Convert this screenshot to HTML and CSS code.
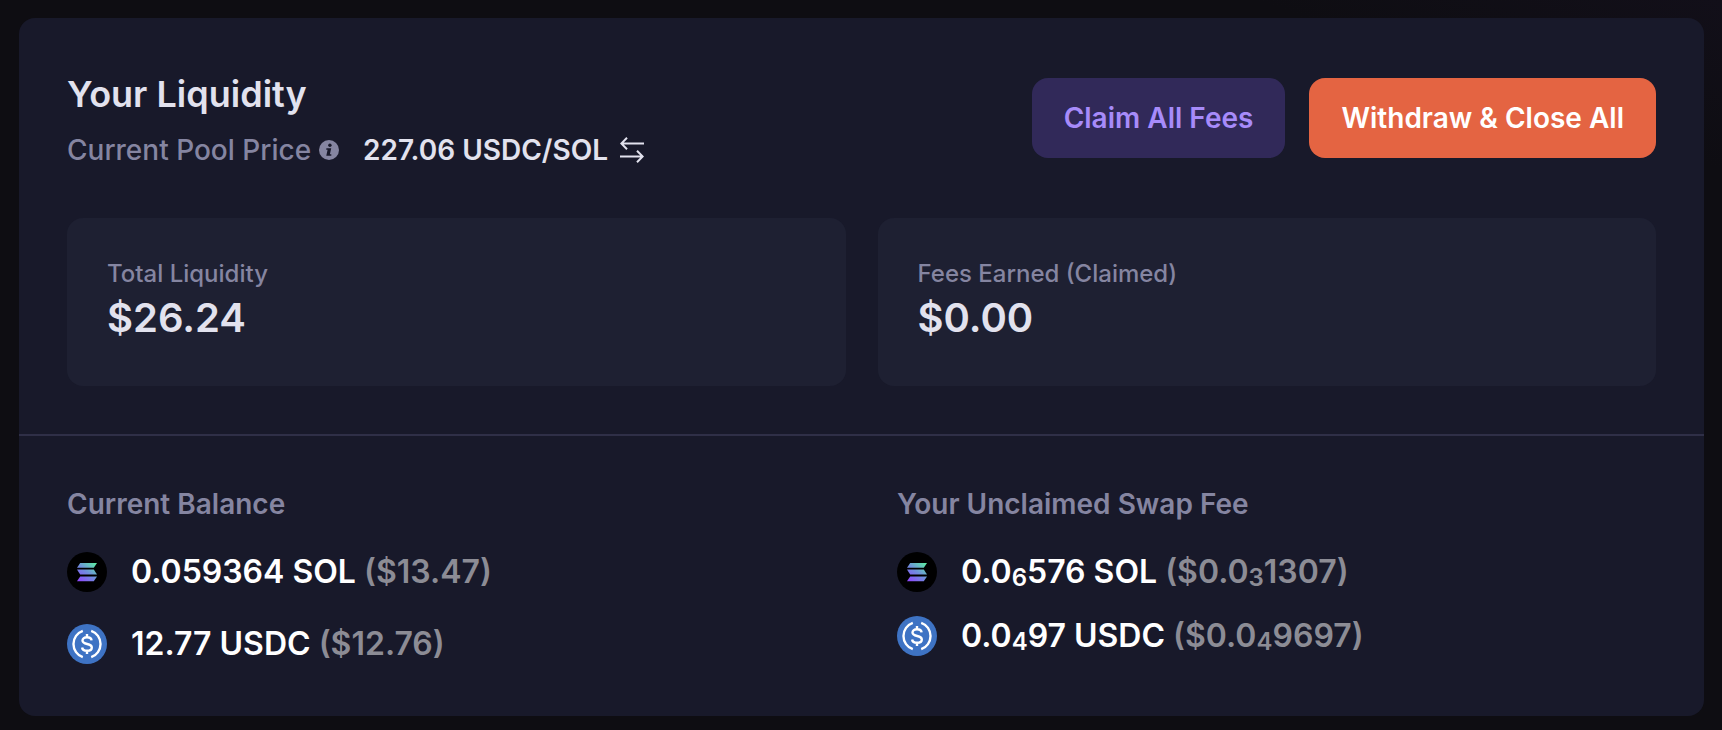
FILE: index.html
```html
<!DOCTYPE html>
<html lang="en">
<head>
<meta charset="utf-8">
<title>Your Liquidity</title>
<meta name="viewport" content="width=device-width, initial-scale=1">
<link rel="stylesheet" href="styles.css">
</head>
<body>
<svg class="defs" aria-hidden="true">
  <defs>
    <linearGradient id="sol-gradient" gradientUnits="userSpaceOnUse" x1="12" y1="30" x2="28" y2="10">
      <stop offset="0" stop-color="#9045ff"/>
      <stop offset="0.5" stop-color="#6f8fdc"/>
      <stop offset="1" stop-color="#5cf0a0"/>
    </linearGradient>
    <symbol id="sol" viewBox="0 0 40 40">
      <circle cx="20" cy="20" r="20" fill="#000"/>
      <g fill="url(#sol-gradient)">
        <path d="M13.2 11H30l-3.200 4.800H10z"/>
        <path d="M10 17.600H26.800L30 22.400H13.200z"/>
        <path d="M13.200 24.600H30l-3.200 4.600H10z"/>
      </g>
    </symbol>
    <symbol id="usdc" viewBox="0 0 40 40">
      <circle cx="20" cy="20" r="20" fill="#3e73c4"/>
      <g fill="none" stroke="#fff" stroke-width="2.4">
        <path d="M15.800 6.800a14 14 0 0 0 0 26.400M24.200 6.800a14 14 0 0 1 0 26.400"/>
        <path d="M24.600 16.400c-.3-2-2-3.100-4.600-3.100-2.700 0-4.500 1.200-4.500 3.200 0 4.800 9.300 2.200 9.300 7 0 2-1.900 3.300-4.700 3.300-2.900 0-4.700-1.200-5-3.300M20 10v3.400M20 26.700V30"/>
      </g>
    </symbol>
  </defs>
</svg>
<main class="card">
  <section class="summary">
    <header class="header">
      <div class="heading">
        <h1 class="title">Your Liquidity</h1>
        <div class="price">
          <span class="price-label">Current Pool Price
            <svg class="info" viewBox="0 0 20 20" aria-hidden="true"><circle cx="10" cy="10" r="10" fill="#8585a1"/><circle cx="10.900" cy="5.200" r="1.700" fill="#18192a"/><path d="M7.400 8.300h4.800l-1.300 5.900h1.400v1.500H7.300l1.300-5.900H7.200z" fill="#18192a"/></svg>
          </span>
          <span class="price-value">227.06 USDC/SOL
            <button class="swap" type="button" aria-label="Invert price">
              <svg class="swap-icon" viewBox="0 0 24 26" aria-hidden="true"><path d="M24 6.500H1M7 .800L1.300 6.500 7 12.200M0 19.500h23M17 13.800l5.700 5.700-5.700 5.700"/></svg>
            </button>
          </span>
        </div>
      </div>
      <div class="actions">
        <button class="button button-claim" type="button">Claim All Fees</button>
        <button class="button button-withdraw" type="button">Withdraw &amp; Close All</button>
      </div>
    </header>
    <dl class="stats">
      <div class="stat"><dt class="stat-label">Total Liquidity</dt><dd class="stat-value">$26.24</dd></div>
      <div class="stat"><dt class="stat-label">Fees Earned (Claimed)</dt><dd class="stat-value">$0.00</dd></div>
    </dl>
  </section>
  <div class="holdings">
    <section class="holding">
      <h2 class="subtitle">Current Balance</h2>
      <ul class="tokens tokens-loose">
        <li class="token"><svg class="coin" aria-hidden="true"><use href="#sol"/></svg><span>0.059364 SOL <span class="fiat">($13.47)</span></span></li>
        <li class="token"><svg class="coin" aria-hidden="true"><use href="#usdc"/></svg><span>12.77 USDC <span class="fiat">($12.76)</span></span></li>
      </ul>
    </section>
    <section class="holding">
      <h2 class="subtitle">Your Unclaimed Swap Fee</h2>
      <ul class="tokens">
        <li class="token"><svg class="coin" aria-hidden="true"><use href="#sol"/></svg><span>0.0<sub>6</sub>576 SOL <span class="fiat">($0.0<sub>3</sub>1307)</span></span></li>
        <li class="token"><svg class="coin" aria-hidden="true"><use href="#usdc"/></svg><span>0.0<sub>4</sub>97 USDC <span class="fiat">($0.0<sub>4</sub>9697)</span></span></li>
      </ul>
    </section>
  </div>
</main>
</body>
</html>
```
FILE: styles.css
```css
* {
  box-sizing: border-box;
}

body {
  margin: 0;
  padding: 18px 18px 14px 19px;
  background: linear-gradient(200deg, #120f19 0, #0e0d12 160px);
  color: #fff;
  font-family: Inter, "Liberation Sans", sans-serif;
}

h1, h2, ul, dl, dd {
  margin: 0;
  padding: 0;
}

.defs {
  position: absolute;
  width: 0;
  height: 0;
}

.card {
  border-radius: 16px;
  background: #18192a;
}

.summary {
  padding: 48px;
  border-bottom: 2px solid #2f2f47;
}

.header {
  display: flex;
  flex-wrap: wrap;
  align-items: center;
  justify-content: space-between;
  gap: 24px;
  margin-bottom: 48px;
}

.heading {
  display: grid;
  gap: 8px;
}

.title {
  color: #e2e2ee;
  font-size: 36px;
  font-weight: 600;
  line-height: 56px;
}

.price {
  display: flex;
  flex-wrap: wrap;
  column-gap: 24px;
  font-size: 28px;
  line-height: 40px;
}

.price-label,
.price-value {
  display: flex;
  align-items: center;
}

.price-label {
  gap: 8px;
  color: #8585a1;
  font-weight: 500;
}

.price-value {
  gap: 12px;
  color: #e2e2ee;
  font-weight: 600;
}

.info {
  width: 20px;
  height: 20px;
}

.swap {
  display: flex;
  padding: 0;
  border: 0;
  background: none;
  color: inherit;
  cursor: pointer;
}

.swap-icon {
  width: 24px;
  height: 26px;
  fill: none;
  stroke: currentColor;
  stroke-width: 2;
}

.actions {
  display: flex;
  flex-wrap: wrap;
  gap: 24px;
}

.button {
  padding: 20px 32px;
  border: 0;
  border-radius: 16px;
  font: 600 28px/40px Inter, "Liberation Sans", sans-serif;
  cursor: pointer;
}

.button-claim {
  background: #312959;
  color: #a78bfa;
}

.button-withdraw {
  background: #e46442;
  color: #fff;
}

.stats {
  display: grid;
  grid-template-columns: 1fr 1fr;
  gap: 32px;
}

.stat {
  padding: 40px;
  border-radius: 16px;
  background: #1e2032;
}

.stat-label {
  color: #8585a1;
  font-size: 24px;
  font-weight: 500;
  line-height: 32px;
}

.stat-value {
  color: #e2e2ee;
  font-size: 40px;
  font-weight: 600;
  line-height: 56px;
}

.holdings {
  display: grid;
  grid-template-columns: 1fr 1fr;
  gap: 71px;
  padding: 48px;
}

.subtitle {
  margin-bottom: 24px;
  color: #8585a1;
  font-size: 28px;
  font-weight: 600;
  line-height: 40px;
}

.tokens {
  display: grid;
  gap: 16px;
  list-style: none;
}

.tokens-loose {
  gap: 24px;
}

.token {
  display: flex;
  align-items: center;
  gap: 24px;
  font-size: 32px;
  font-weight: 600;
  line-height: 48px;
}

.token sub {
  font-size: 24px;
  line-height: 0;
  vertical-align: -3px;
}

.coin {
  flex: none;
  width: 40px;
  height: 40px;
}

.fiat {
  color: #8c8c95;
}
```
